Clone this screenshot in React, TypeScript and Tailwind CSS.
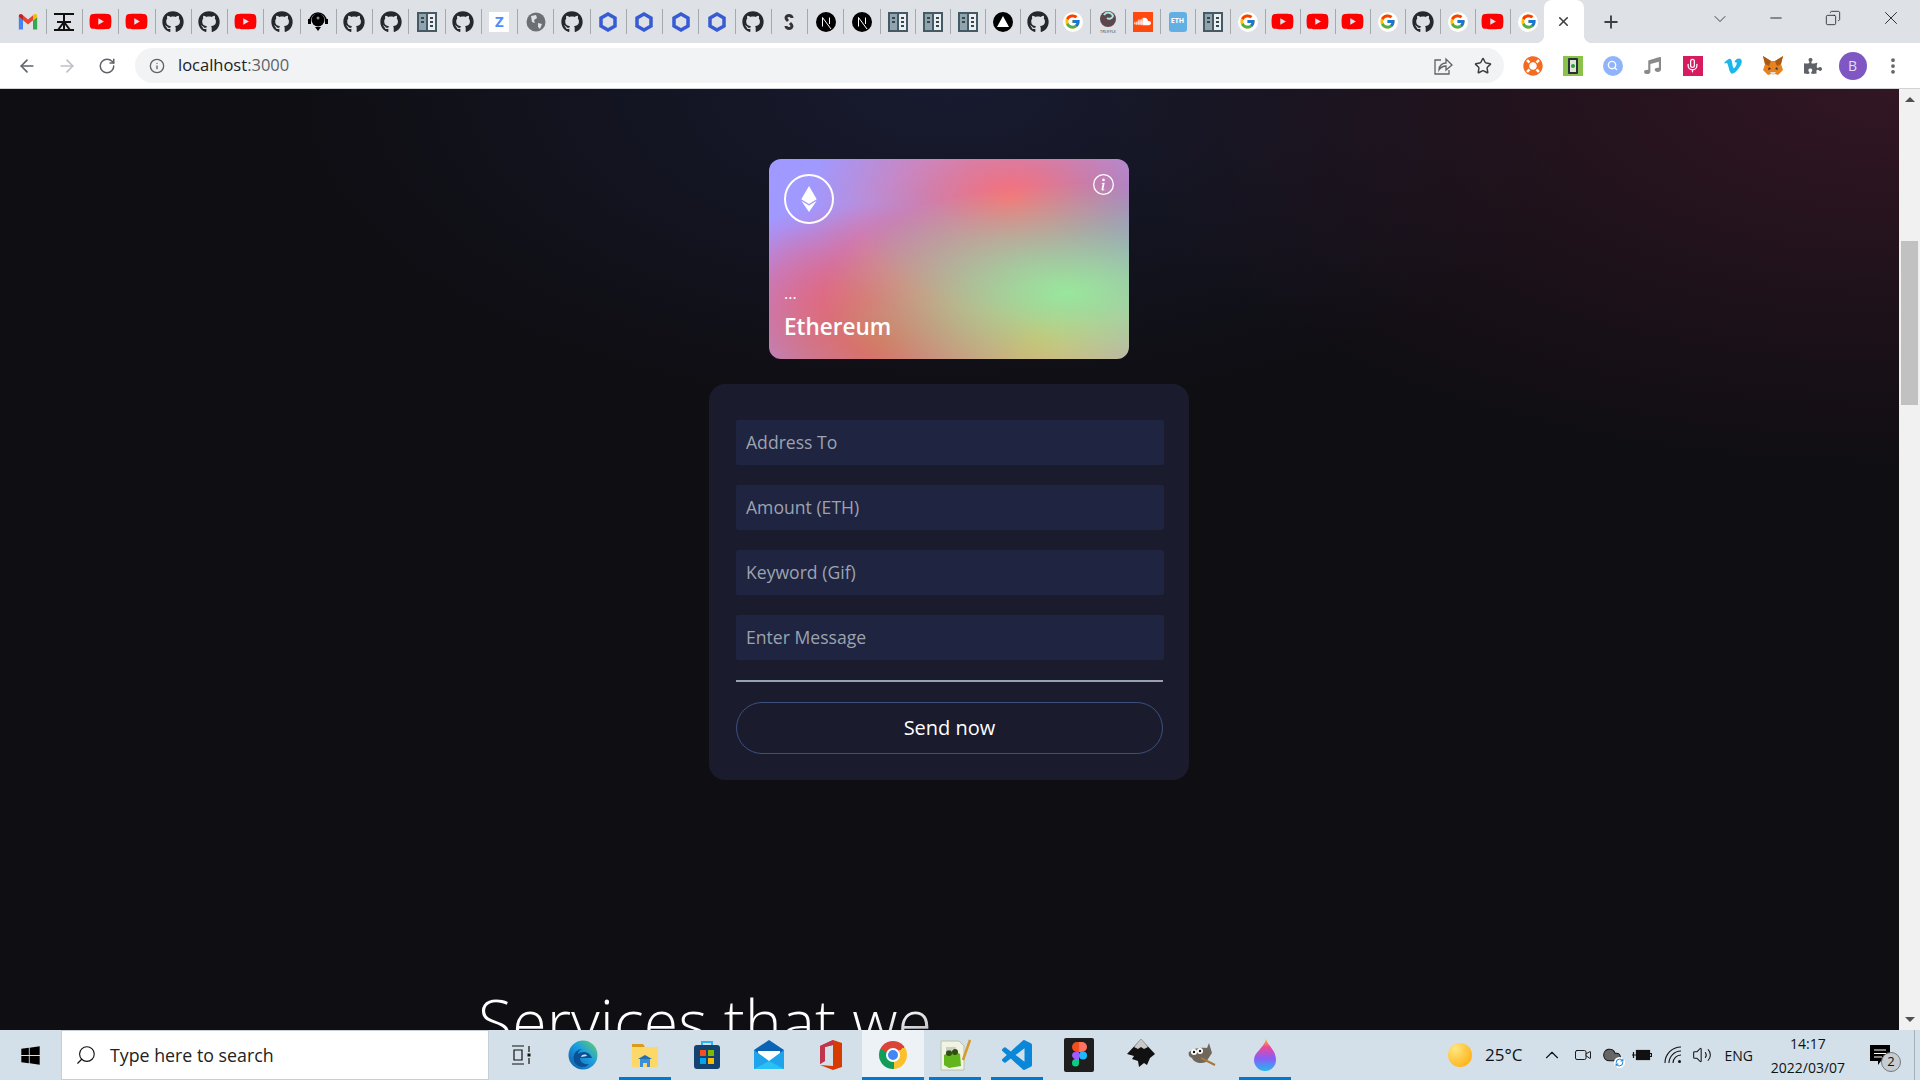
import {
  ArrowLeft,
  ArrowRight,
  ChevronDown,
  ChevronUp,
  Cloud,
  Copy,
  Info,
  Mic,
  Minus,
  MoreVertical,
  Plus,
  RefreshCw,
  RotateCw,
  Search,
  Star,
  Video,
  Volume2,
  X,
} from "lucide-react";
import { BsInfoCircle } from "react-icons/bs";
import {
  FaEthereum,
  FaGithub,
  FaLifeRing,
  FaMusic,
  FaPuzzlePiece,
  FaSoundcloud,
  FaVimeoV,
  FaWindows,
  FaYoutube,
} from "react-icons/fa";
import { FcGoogle } from "react-icons/fc";

function Gmail() {
  return (
    <svg width="20" height="20" viewBox="0 0 24 24">
      <path fill="#4285F4" d="M1 21h5V10L1 6z" />
      <path fill="#34A853" d="M18 21h5V6l-5 4z" />
      <path fill="#EA4335" d="M6 10V4l6 5 6-5v6l-6 5z" />
      <path fill="#FBBC04" d="M18 4l1.5-1.2C21 1.8 23 2.8 23 4.5V6l-5 4z" />
      <path fill="#C5221B" d="M6 4L4.5 2.8C3 1.8 1 2.8 1 4.5V6l5 4z" />
    </svg>
  );
}

function Ribbon() {
  return (
    <svg width="20" height="22" viewBox="0 0 20 22" stroke="#111" strokeWidth="2" fill="none">
      <path d="M0 3h20M3 11h14M0 19h20M10 3v16M4 19l6-8 6 8" />
    </svg>
  );
}

function Yt() {
  return <FaYoutube size={23} color="#ff0000" />;
}

function Gh() {
  return <FaGithub size={22} color="#24292e" />;
}

function G() {
  return (
    <span className="w-5 h-5 rounded-full bg-white flex items-center justify-center">
      <FcGoogle size={17} />
    </span>
  );
}

function Sheet() {
  return (
    <svg width="20" height="20" viewBox="0 0 20 20">
      <rect width="20" height="20" fill="#455a64" />
      <rect x="2" y="2" width="7" height="16" fill="#90a4ae" />
      <rect x="11" y="2" width="7" height="16" fill="#eceff1" />
      <path d="M4 5h3v2H4zM4 9h3v2H4zM13 5h3v2h-3zM13 9h3v2h-3zM13 13h3v2h-3z" fill="#37474f" />
    </svg>
  );
}

function Chain() {
  return (
    <svg width="18" height="20" viewBox="0 0 18 20" fill="none">
      <path d="M9 2l7 4v8l-7 4-7-4V6z" stroke="#375bd2" strokeWidth="3.5" />
    </svg>
  );
}

function Next() {
  return (
    <svg width="20" height="20" viewBox="0 0 20 20" fill="none" stroke="#fff" strokeWidth="1">
      <circle cx="10" cy="10" r="10" fill="#000" stroke="none" />
      <path d="M6.5 14.5V5.5L15 17M13.5 5.5V12" />
    </svg>
  );
}

function Podcast() {
  return (
    <svg width="20" height="22" viewBox="0 0 20 22">
      <circle cx="10" cy="9" r="6.5" fill="#000" />
      <path d="M2 10a8 8 0 0 1 16 0" stroke="#000" strokeWidth="1.5" fill="none" />
      <rect x="0" y="8" width="3" height="5" fill="#000" />
      <rect x="17" y="8" width="3" height="5" fill="#000" />
      <path d="M7 16h6l-3 4z" fill="#000" />
      <circle cx="10" cy="7" r="1.5" fill="#888" />
    </svg>
  );
}

function Zed() {
  return (
    <span className="w-5 h-5 bg-white flex items-center justify-center text-[15px] leading-none font-bold text-[#4d8ef7]">
      Z
    </span>
  );
}

function Globe() {
  return (
    <svg width="20" height="20" viewBox="0 0 20 20">
      <circle cx="10" cy="10" r="9.5" fill="#6b7075" />
      <path d="M5 4l5-1 1 3-3 2 1 3-3-1zM12 11l4 1-2 5-2-2z" fill="#dee1e6" />
    </svg>
  );
}

function SLink() {
  return (
    <svg width="10" height="16" viewBox="0 0 10 16" fill="none" stroke="#333" strokeWidth="3">
      <path d="M8 4a3 2.5 0 0 0-6 0c0 1 1 2 2 3M6 9c1 1 2 2 2 3a3 2.5 0 0 1-6 0" />
    </svg>
  );
}

function Triangle() {
  return (
    <span className="w-5 h-5 rounded-full bg-black flex items-center justify-center">
      <svg width="12" height="11" viewBox="0 0 12 11">
        <path d="M6 0l6 11H0z" fill="#fff" />
      </svg>
    </span>
  );
}

function Truffle() {
  return (
    <svg width="20" height="24" viewBox="0 0 20 24">
      <circle cx="10" cy="9" r="8" fill="#5e464d" />
      <path d="M6 5a5 5 0 0 1 9 1 4 4 0 0 1-6 2" stroke="#a8e6e1" strokeWidth="2" fill="none" />
      <text x="10" y="23" fontSize="4" textAnchor="middle" fill="#444" fontFamily="Open Sans">
        TRUFFLE
      </text>
    </svg>
  );
}

function Soundcloud() {
  return (
    <span className="w-5 h-5 bg-[#ff4a0f] flex items-center justify-center">
      <FaSoundcloud size={17} color="#fff" />
    </span>
  );
}

function EthBubble() {
  return (
    <span className="relative w-[18px] h-[20px] rounded-[3px] bg-[#62b0e3] text-white text-[7px] font-bold flex items-center justify-center">
      ETH
    </span>
  );
}

const tabsA = [
  <Gmail />, <Ribbon />, <Yt />, <Yt />, <Gh />, <Gh />, <Yt />, <Gh />, <Podcast />, <Gh />, <Gh />, <Sheet />,
  <Gh />, <Zed />, <Globe />, <Gh />, <Chain />, <Chain />, <Chain />, <Chain />, <Gh />, <SLink />, <Next />, <Next />,
];

const tabsB = [
  <Sheet />, <Sheet />, <Sheet />, <Triangle />, <Gh />, <G />, <Truffle />, <Soundcloud />, <EthBubble />, <Sheet />,
  <G />, <Yt />, <Yt />, <Yt />, <G />, <Gh />, <G />, <Yt />, <G />,
];

function TabBar() {
  return (
    <div className="h-[43px] bg-[#dee1e6] flex pl-[10.5px] shrink-0">
      {tabsA.map((icon, i) => (
        <div key={i} className="w-[36.26px] shrink-0 flex items-center justify-center border-r border-[#a5a8ac] my-[9px]">
          {icon}
        </div>
      ))}
      {tabsB.map((icon, i) => (
        <div
          key={i}
          className={`w-[35px] shrink-0 flex items-center justify-center my-[9px] ${i < 18 ? "border-r border-[#a5a8ac]" : ""}`}
        >
          {icon}
        </div>
      ))}

      {/* Active tab */}
      <div className="relative w-[40px] shrink-0 -ml-[2px] bg-white rounded-t-lg flex items-center justify-center">
        <X size={15} strokeWidth={2.5} color="#3c4043" />
        <span className="absolute bottom-0 -left-2 w-2 h-2 bg-[radial-gradient(circle_at_0%_0%,#dee1e6_8px,#fff_8px)]" />
        <span className="absolute bottom-0 -right-2 w-2 h-2 bg-[radial-gradient(circle_at_100%_0%,#dee1e6_8px,#fff_8px)]" />
      </div>
      <div className="w-[54px] shrink-0 flex items-center justify-center">
        <Plus size={20} strokeWidth={2.25} color="#3c4043" />
      </div>

      {/* Window buttons */}
      <div className="flex-1 flex items-start pt-[9px] text-[#222]">
        <ChevronDown size={20} strokeWidth={1} className="ml-[72px] shrink-0" />
        <Minus size={18} strokeWidth={1.25} className="ml-[37px] shrink-0" />
        <Copy size={16} strokeWidth={1.25} className="ml-[40px] mt-[1px] -scale-x-100 shrink-0" />
        <X size={22} strokeWidth={1} className="ml-[39px] -mt-[2px] shrink-0" />
      </div>
    </div>
  );
}

function Fox() {
  return (
    <svg width="22" height="22" viewBox="0 0 22 22">
      <path d="M1 1l8 5h4l8-5-2 8 2 6-5 5-3-1H9l-3 1-5-5 2-6z" fill="#e8821e" />
      <path d="M1 1l8 5-2 5-4-2zM21 1l-8 5 2 5 4-2z" fill="#a85a15" />
      <path d="M7 12l2 2-3 1zM15 12l-2 2 3 1z" fill="#233447" />
      <path d="M8 17h6l-2 3h-2z" fill="#e4ddd7" />
    </svg>
  );
}

function Toolbar() {
  return (
    <div className="h-[46px] bg-white border-b border-[#d0d2d5] flex items-center shrink-0 relative">
      <div className="w-[135px] flex items-center pl-[17px] gap-[20px] text-[#5f6368]">
        <ArrowLeft size={20} />
        <ArrowRight size={20} color="#bdc1c6" />
        <RotateCw size={18} className="ml-px" />
      </div>
      <div className="w-[1369px] h-[35px] rounded-full bg-[#f1f3f4] flex items-center pl-[14px] pr-[12px]">
        <Info size={16} color="#5f6368" />
        <span className="ml-[13px] text-[16.5px] text-[#202124]">
          localhost<span className="text-[#5f6368]">:3000</span>
        </span>
        <div className="ml-auto flex items-center gap-[20px] text-[#5f6368]">
          <svg width="20" height="20" viewBox="0 0 20 20" fill="none" stroke="#5f6368" strokeWidth="1.3" className="-translate-x-px">
            <path d="M8 4H2v14h14v-4" />
            <path d="M6 14c0-5 4-7 7-7V3l6 6-6 5v-4c-3 0-5 1-7 4z" />
          </svg>
          <Star size={18} color="#3c4043" strokeWidth={2} />
        </div>
      </div>

      {/* Extensions */}
      <div className="flex items-center pl-[8.5px] h-full">
        <span className="w-[40px] flex justify-center">
          <FaLifeRing size={20} color="#f26b21" />
        </span>
        <span className="w-[40px] flex justify-center">
          <span className="w-5 h-5 bg-[#8bc34a] flex items-center justify-center">
            <span className="w-[10px] h-[16px] bg-[#dfe6d8] rounded-[1px] border-2 border-[#263238] flex items-center justify-center">
              <span className="w-1 h-1 rounded-full bg-[#2e9e3a]" />
            </span>
          </span>
        </span>
        <span className="w-[40px] flex justify-center">
          <span className="w-5 h-5 rounded-full bg-[#90b4fb] flex items-center justify-center">
            <Search size={11} color="#fff" strokeWidth={3} />
          </span>
        </span>
        <span className="w-[40px] flex justify-center">
          <FaMusic size={17} color="#8a8a8a" />
        </span>
        <span className="w-[40px] flex justify-center">
          <span className="w-5 h-5 bg-[#d81b60] flex items-center justify-center">
            <Mic size={15} color="#fff" />
          </span>
        </span>
        <span className="w-[40px] flex justify-center">
          <FaVimeoV size={20} color="#1ab7ea" />
        </span>
        <span className="w-[40px] flex justify-center">
          <Fox />
        </span>
        <span className="w-[40px] flex justify-center">
          <FaPuzzlePiece size={18} color="#5f6368" />
        </span>
        <span className="w-[40px] flex justify-center">
          <span className="w-7 h-7 rounded-full bg-[#7e57c2] text-[#e6dcf5] text-sm flex items-center justify-center">
            B
          </span>
        </span>
        <span className="w-[40px] flex justify-center">
          <MoreVertical size={20} color="#5f6368" strokeWidth={2.5} />
        </span>
      </div>
    </div>
  );
}

function FormInput({ placeholder }: { placeholder: string }) {
  return (
    <input
      placeholder={placeholder}
      className="w-full h-[45px] rounded-[2px] bg-[#1f2440] px-[10px] pb-[2px] text-[17.6px] text-white outline-none placeholder:text-[#9ca3af]"
    />
  );
}

function EthCard() {
  return (
    <div className="w-[360px] h-[200px] rounded-xl p-[15px] pb-[16px] flex flex-col justify-between bg-[#a099ff] bg-[radial-gradient(at_83%_67%,rgb(152,231,156)_0,transparent_58%),radial-gradient(at_67%_20%,hsla(357,94%,71%,1)_0,transparent_59%),radial-gradient(at_88%_35%,hsla(222,81%,65%,1)_0,transparent_50%),radial-gradient(at_31%_91%,hsla(9,61%,61%,1)_0,transparent_52%),radial-gradient(at_27%_71%,hsla(336,91%,65%,1)_0,transparent_49%),radial-gradient(at_74%_89%,hsla(30,98%,65%,1)_0,transparent_51%),radial-gradient(at_53%_75%,hsla(174,94%,68%,1)_0,transparent_45%)]">
      <div className="flex justify-between items-start">
        <div className="w-[50px] h-[50px] rounded-full border-2 border-white flex items-center justify-center">
          <FaEthereum size={26} color="#fff" />
        </div>
        <BsInfoCircle size={21} color="#fff" />
      </div>
      <div className="text-white">
        <p className="text-base leading-5 mb-[8px]">...</p>
        <p className="text-[22.5px] font-semibold leading-8">Ethereum</p>
      </div>
    </div>
  );
}

function Page() {
  return (
    <main className="flex-1 min-w-0 overflow-hidden bg-[#0f0e13] bg-[radial-gradient(800px_380px_at_100%_0%,rgb(50,22,35)_0,transparent_100%),radial-gradient(650px_320px_at_50%_0%,rgb(24,27,48)_0,transparent_100%)]">
      <div className="flex flex-col items-center pt-[70px] pr-px">
        <EthCard />
        <div className="w-[480px] mt-[25px] rounded-2xl bg-[#1a1c2e] pl-[27px] pr-[25px] pt-[36px] pb-[26px]">
          <div className="flex flex-col gap-5">
            <FormInput placeholder="Address To" />
            <FormInput placeholder="Amount (ETH)" />
            <FormInput placeholder="Keyword (Gif)" />
            <FormInput placeholder="Enter Message" />
          </div>
          <div className="h-[2px] bg-gray-400 mt-5 mr-px" />
          <button className="w-[427px] h-[52px] mt-[20px] rounded-full border border-[#3d4f7c] text-white text-[20px] font-medium">
            Send now
          </button>
        </div>
      </div>
      <h2 className="w-fit ml-[478px] mt-[205px] text-[62.7px] leading-[72px] font-light bg-[linear-gradient(160deg,#fff_75%,#888_100%)] bg-clip-text text-transparent">
        Services that we
      </h2>
    </main>
  );
}

function Scrollbar() {
  return (
    <div className="w-[21px] bg-[#f1f1f1] flex flex-col items-center shrink-0">
      <span className="mt-[8px] w-0 h-0 border-x-[5px] border-x-transparent border-b-[5px] border-b-[#505050]" />
      <span className="mt-[139px] w-[17px] h-[164px] bg-[#c1c1c1]" />
      <span className="mt-auto mb-[8px] w-0 h-0 border-x-[5px] border-x-transparent border-t-[5px] border-t-[#505050]" />
    </div>
  );
}

function Edge() {
  return (
    <svg width="30" height="30" viewBox="0 0 30 30">
      <defs>
        <linearGradient id="edge" x1="0" y1="1" x2="1" y2="0">
          <stop offset="0" stopColor="#0c59a4" />
          <stop offset="0.55" stopColor="#1b9de2" />
          <stop offset="1" stopColor="#6bd45c" />
        </linearGradient>
      </defs>
      <circle cx="15" cy="15" r="14.5" fill="url(#edge)" />
      <path d="M29 18H12c0 5 5 7 9 6-4 5-13 3-15-3C4 14 9 9 14 9c-3 1-4 3-4 5 5-4 12-2 14 4z" fill="#0b4f94" />
      <path d="M13 17c1-3 5-3 6-1z" fill="#d3e0e9" />
    </svg>
  );
}

function Explorer() {
  return (
    <svg width="28" height="28" viewBox="0 0 28 28">
      <path d="M1 3h11l2 3H1z" fill="#d99c1e" />
      <rect x="1" y="6" width="26" height="20" fill="#fbd868" />
      <path d="M9 26v-8h10v8h-3v-4h-4v4z" fill="#3a8fd9" />
      <path d="M7 18l7-4 7 4z" fill="#1f6fb5" />
    </svg>
  );
}

function Store() {
  return (
    <svg width="28" height="30" viewBox="0 0 28 30">
      <path d="M9 6V2h10v4" stroke="#2bb3f3" strokeWidth="2" fill="none" />
      <rect x="1" y="5" width="26" height="24" rx="3" fill="#14436f" />
      <rect x="7" y="10" width="6" height="6" fill="#f25022" />
      <rect x="15" y="10" width="6" height="6" fill="#7fba00" />
      <rect x="7" y="18" width="6" height="6" fill="#00a4ef" />
      <rect x="15" y="18" width="6" height="6" fill="#ffb900" />
    </svg>
  );
}

function Mail() {
  return (
    <svg width="30" height="30" viewBox="0 0 30 30">
      <path d="M0 10L15 0l15 10v6H0z" fill="#0a63b4" />
      <path d="M4 11h22v6L15 22 4 17z" fill="#fff" />
      <path d="M0 10l15 11 15-11v19H0z" fill="#1fa3ea" />
      <path d="M0 29l15-8 15 8z" fill="#29c0f5" />
    </svg>
  );
}

function Office() {
  return (
    <svg width="24" height="32" viewBox="0 0 24 32">
      <path d="M14 1l9 3v24l-9 3-13-5 13 1V6L6 8v14l-5 3V7z" fill="#d83b01" />
      <path d="M14 1L1 7v18l5-3V8l8-2z" fill="#c0344c" />
    </svg>
  );
}

function Chrome() {
  return (
    <span className="w-7 h-[32px] flex items-center justify-center">
      <span className="w-7 h-7 rounded-full bg-[conic-gradient(#db4437_0deg_55deg,#fbc02d_55deg_175deg,#0f9d58_175deg_295deg,#db4437_295deg)] flex items-center justify-center">
        <span className="w-[14px] h-[14px] rounded-full bg-[#4285f4] border-[2px] border-white" />
      </span>
    </span>
  );
}

function Notepad() {
  return (
    <svg width="32" height="34" viewBox="0 0 32 34">
      <path d="M2 3h18l5 5v24H2z" fill="#f1f3e4" stroke="#b9c2a8" />
      <path d="M5 17c4-3 12-4 16-1l1 12-12 2-5-3z" fill="#63b51c" />
      <circle cx="10" cy="15" r="3" fill="#2e4f12" />
      <circle cx="16" cy="14" r="3" fill="#2e4f12" />
      <path d="M7 10h10M7 12h6" stroke="#a8ad9c" strokeWidth="1" />
      <path d="M24 22l7-20" stroke="#d59a2a" strokeWidth="2.5" />
    </svg>
  );
}

function VsCode() {
  return (
    <svg width="30" height="32" viewBox="0 0 24 24">
      <path
        fill="#0a87d9"
        d="M23.15 2.587L18.21.21a1.494 1.494 0 0 0-1.705.29l-9.46 8.63-4.12-3.128a.999.999 0 0 0-1.276.057L.327 7.261A1 1 0 0 0 .326 8.74L3.899 12 .326 15.26a1 1 0 0 0 .001 1.479L1.65 17.94a.999.999 0 0 0 1.276.057l4.12-3.128 9.46 8.63a1.492 1.492 0 0 0 1.704.29l4.942-2.377A1.5 1.5 0 0 0 24 20.06V3.939a1.5 1.5 0 0 0-.85-1.352zm-5.146 14.861L10.826 12l7.178-5.448v10.896z"
      />
    </svg>
  );
}

function Figma() {
  return (
    <svg width="30" height="34" viewBox="0 0 30 34">
      <rect width="30" height="34" rx="2" fill="#1e1e1e" />
      <path d="M8 9a5 5 0 0 1 5-5h2v10h-2a5 5 0 0 1-5-5z" fill="#f24e1e" />
      <path d="M15 4h3a5 5 0 0 1 0 10h-3z" fill="#ff7262" />
      <path d="M8 17a3.5 3.5 0 0 1 5-3h2v7h-2a4 4 0 0 1-5-4z" fill="#a259ff" />
      <circle cx="19" cy="17.5" r="4" fill="#1abcfe" />
      <path d="M8 25a4 4 0 0 1 4-4h3v4a3.5 3.5 0 0 1-7 0z" fill="#0acf83" />
    </svg>
  );
}

function Inkscape() {
  return (
    <svg width="30" height="34" viewBox="0 0 30 34">
      <path d="M15 1L1 16l7 2-2 3 6 2 1 6 5-4 3 2 3-7 5-4z" fill="#111" />
      <path d="M15 1L8 9l4 2 3-2 3 2 4-2z" fill="#c9c9c9" />
    </svg>
  );
}

function Gimp() {
  return (
    <svg width="32" height="28" viewBox="0 0 32 28">
      <path d="M22 2l3 10-6 9c-5 2-12 1-14-4-3-1-4-4-3-6 5-4 12-5 18-4z" fill="#6f675c" />
      <circle cx="7" cy="11" r="3" fill="#fff" />
      <circle cx="13" cy="10" r="3" fill="#fff" />
      <circle cx="7" cy="11" r="1.2" fill="#111" />
      <circle cx="13" cy="10" r="1.2" fill="#111" />
      <path d="M14 17l14 7" stroke="#a5793a" strokeWidth="2" />
    </svg>
  );
}

function Drop() {
  return (
    <svg width="24" height="34" viewBox="0 0 24 34">
      <defs>
        <linearGradient id="drop" x1="0" y1="0" x2="0" y2="1">
          <stop offset="0" stopColor="#fbbf24" />
          <stop offset="0.25" stopColor="#ec4899" />
          <stop offset="0.6" stopColor="#8b5cf6" />
          <stop offset="1" stopColor="#22b8f0" />
        </linearGradient>
      </defs>
      <path d="M13 1c2 7 10 11 10 21a11 11 0 0 1-22 0C1 14 11 10 13 1z" fill="url(#drop)" />
    </svg>
  );
}

function Battery() {
  return (
    <svg width="20" height="14" viewBox="0 0 20 14" fill="none" stroke="#111" strokeWidth="1.2">
      <rect x="4.5" y="2.5" width="13" height="9" fill="#111" />
      <path d="M18 5.5h1.5v3H18M0 7h4M1.5 4v6" />
    </svg>
  );
}

function WifiArcs() {
  return (
    <svg width="18" height="18" viewBox="0 0 18 18" fill="none" stroke="#111" strokeWidth="1.1">
      <path d="M1 17A16 16 0 0 1 17 1M5 17A12 12 0 0 1 17 5M9 17a8 8 0 0 1 8-8" />
      <circle cx="15.5" cy="15.5" r="1.5" fill="#111" stroke="none" />
    </svg>
  );
}

const taskApps = [
  { icon: <Edge /> },
  { icon: <Explorer />, bar: "w-[52px]" },
  { icon: <Store /> },
  { icon: <Mail /> },
  { icon: <Office /> },
  { icon: <Chrome />, bar: "w-full", active: true },
  { icon: <Notepad />, bar: "w-[52px]" },
  { icon: <VsCode />, bar: "w-[52px]" },
  { icon: <Figma /> },
  { icon: <Inkscape /> },
  { icon: <Gimp /> },
  { icon: <Drop />, bar: "w-[52px]" },
];

function Taskbar() {
  return (
    <div className="h-[50px] bg-[#d3e0e9] flex items-center shrink-0 text-[#111]">
      <div className="w-[61px] flex justify-center">
        <FaWindows size={21} color="#000" />
      </div>
      <div className="w-[428px] h-full bg-white border border-[#c6cfd6] flex items-center pl-[13px]">
        <Search size={22} strokeWidth={1.25} className="-scale-x-100" />
        <span className="ml-[13px] text-[17.8px] text-[#222]">Type here to search</span>
      </div>
      <div className="w-[63px] flex justify-center">
        <svg width="20" height="20" viewBox="0 0 20 20" fill="none" stroke="#111" strokeWidth="1.2">
          <path d="M1 1h12M1 19h12M3 5h8v10H3zM18 1v6M18 13v6" />
          <rect x="16.5" y="8.5" width="3" height="3" fill="#111" stroke="none" />
        </svg>
      </div>
      {taskApps.map((app, i) => (
        <div
          key={i}
          className={`relative w-[62px] h-full flex items-center justify-center ${app.active ? "bg-[#edf2f6]" : ""}`}
        >
          {app.icon}
          {app.bar && <span className={`absolute bottom-0 h-[3px] bg-[#0078d4] ${app.bar}`} />}
        </div>
      ))}

      {/* Tray */}
      <div className="ml-[152px] w-6 h-6 rounded-full bg-[radial-gradient(at_30%_25%,#ffe680,#ffa600)]" />
      <span className="ml-[13px] text-[17px]">25°C</span>
      <ChevronUp size={22} strokeWidth={1.25} className="ml-[19px]" />
      <Video size={18} strokeWidth={1.25} className="ml-[11px]" />
      <div className="relative ml-[10px]">
        <Cloud size={20} strokeWidth={1.25} fill="#666" />
        <span className="absolute -right-[3px] -bottom-[3px] w-[11px] h-[11px] rounded-full bg-white flex items-center justify-center">
          <RefreshCw size={9} color="#0078d4" strokeWidth={2.5} />
        </span>
      </div>
      <div className="ml-[10px]">
        <Battery />
      </div>
      <div className="ml-[12px]">
        <WifiArcs />
      </div>
      <Volume2 size={20} strokeWidth={1.25} className="ml-[10px]" />
      <span className="ml-[12px] text-[14px]">ENG</span>
      <div className="ml-[15px] w-[80px] pt-px text-center text-[14px] leading-[24px]">
        <div>14:17</div>
        <div>2022/03/07</div>
      </div>
      <div className="relative ml-[21px]">
        <svg width="22" height="22" viewBox="0 0 22 22">
          <path d="M1 1h20v16h-9l-3 4v-4H1z" fill="#000" />
          <path d="M5 6h12M5 9.5h12M5 13h8" stroke="#fff" strokeWidth="1.2" />
        </svg>
        <span className="absolute -right-[10px] bottom-[-6px] w-5 h-5 rounded-full bg-[#c5cdd3] border border-[#777] text-[13px] flex items-center justify-center">
          2
        </span>
      </div>
      <div className="ml-auto h-full w-[6px] border-l border-[#a5b0b8]" />
    </div>
  );
}

export default function App() {
  return (
    <div className="w-screen h-screen overflow-hidden flex flex-col font-['Open_Sans',sans-serif]">
      <TabBar />
      <Toolbar />
      <div className="flex-1 min-h-0 flex">
        <Page />
        <Scrollbar />
      </div>
      <Taskbar />
    </div>
  );
}
